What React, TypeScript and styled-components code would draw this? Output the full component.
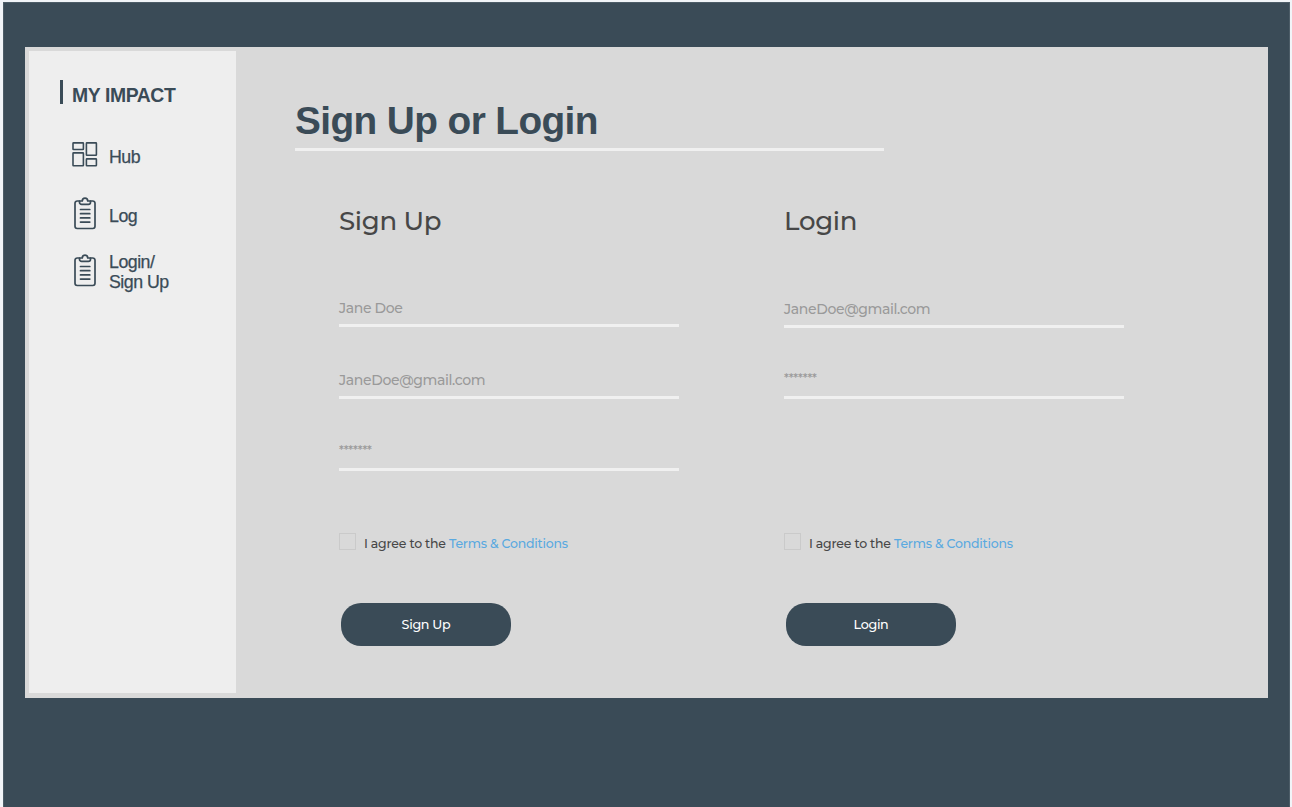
import React from "react";
import styled, { createGlobalStyle } from "styled-components";

const GlobalStyle = createGlobalStyle`
  * {
    box-sizing: border-box;
  }
  body {
    margin: 0;
    background: #f1f4f8;
    font-family: "Liberation Sans", Arial, sans-serif;
  }
`;

const Page = styled.div`
  height: 807px;
  padding: 2px 2px 0 3px;
`;

const Frame = styled.div`
  height: 805px;
  padding: 44px 21px 0 21px;
  background: #3a4b57;
  border: 1px solid #4d5d68;
  border-bottom: none;
`;

const Panel = styled.div`
  display: flex;
  height: 651px;
  padding: 4px 0 5px 4px;
  background: #d9d9d9;
`;

const Sidebar = styled.nav`
  width: 207px;
  padding: 29px 0 0 31px;
  background: #eeeeee;
  color: #3a4b57;
`;

const Brand = styled.div`
  display: flex;
  align-items: center;
  height: 24px;
  padding: 6px 0 0 9px;
  border-left: 3px solid #3a4b57;
  font-size: 19.4px;
  line-height: 24px;
  font-weight: bold;
  letter-spacing: -0.4px;
  white-space: nowrap;
`;

const NavItem = styled.a<{ $gap: number; $drop?: number }>`
  display: flex;
  align-items: flex-start;
  margin: ${(p) => p.$gap}px 0 0 12px;
  font-size: 17.8px;
  line-height: 20px;
  letter-spacing: -0.5px;
  -webkit-text-stroke: 0.25px #3a4b57;

  svg {
    flex: none;
    width: 26px;
    margin-right: 11px;
  }

  span {
    margin-top: ${(p) => p.$drop ?? 0}px;
  }
`;

const Main = styled.main`
  flex: 1;
  padding: 45px 0 0 59px;
`;

const Heading = styled.h1`
  width: 589px;
  height: 55px;
  margin: 0;
  border-bottom: 3px solid #f0f0f0;
  color: #3a4b57;
  font-size: 38.8px;
  line-height: 49px;
  font-weight: bold;
  letter-spacing: -0.6px;
`;

const Forms = styled.div`
  display: flex;
  gap: 105px;
  margin-left: 44px;
  font-family: Montserrat, Inter, sans-serif;
  font-weight: 500;
`;

const Form = styled.section`
  display: flex;
  flex-direction: column;
  width: 340px;
  height: 495px;
  padding-top: 53px;
`;

const FormTitle = styled.h2`
  height: 81px;
  margin: 0;
  color: #474747;
  font-size: 26px;
  line-height: 34px;
  font-weight: 500;
  letter-spacing: -0.3px;
`;

const Field = styled.div<{ $height: number }>`
  display: flex;
  flex-direction: column;
  justify-content: flex-end;
  height: ${(p) => p.$height}px;
  border-bottom: 3px solid #f0f0f0;
  color: #9a9a9a;
  font-size: 14px;
  line-height: 18px;
  letter-spacing: -0.36px;
  padding-bottom: 7px;
`;

const Mask = styled.span`
  font-size: 12px;
  line-height: 12px;
  padding-bottom: 4px;
`;

const Terms = styled.label`
  display: flex;
  align-items: center;
  gap: 8px;
  height: 18px;
  margin-top: auto;
  color: #474747;
  font-size: 12.5px;
  letter-spacing: -0.2px;
  white-space: nowrap;

  > span:last-child {
    padding-top: 4px;
  }
`;

const Checkbox = styled.span`
  flex: none;
  width: 17px;
  height: 17px;
  border: 1.5px solid #cacaca;
`;

const TermsLink = styled.a`
  color: #5aa9e0;
`;

const Submit = styled.button`
  width: 170px;
  height: 43px;
  margin: 53px 0 0 2px;
  padding: 0;
  border: none;
  border-radius: 20px;
  background: #3a4b57;
  color: #ffffff;
  font-family: inherit;
  font-size: 12.7px;
  font-weight: 500;
  letter-spacing: -0.3px;
`;

const HubIcon = () => (
  <svg height="25" viewBox="0 0 26 25" fill="none" stroke="#3a4b57" strokeWidth="1.6">
    <rect x="1" y="0.9" width="10.4" height="6.6" rx="0.5" />
    <rect x="14.4" y="0.9" width="10" height="12.4" rx="0.5" />
    <rect x="1" y="10.9" width="10.4" height="12.8" rx="0.5" />
    <rect x="14.4" y="16.9" width="10" height="6.8" rx="0.5" />
  </svg>
);

const ClipboardIcon = () => (
  <svg
    height="33"
    viewBox="0 0 26 33"
    fill="none"
    stroke="#3a4b57"
    strokeWidth="1.7"
    strokeLinecap="round"
    strokeLinejoin="round"
  >
    <path d="M7.5 4H5.2A2.2 2.2 0 0 0 3 6.2V29.3a2.2 2.2 0 0 0 2.2 2.2H20.8A2.2 2.2 0 0 0 23 29.3V6.2A2.2 2.2 0 0 0 20.8 4H18.5" />
    <path d="M7.5 4H10.3C10.3 2.2 11.4 1.2 13 1.2S15.7 2.2 15.7 4H18.5V5.2C18.5 6.5 17.7 7.4 16.4 7.4H9.6C8.3 7.4 7.5 6.5 7.5 5.2Z" />
    <path d="M8.5 12.5H17.8M8.5 16.7H17.8M8.5 20.9H17.8M8.5 25.1H17.8" />
  </svg>
);

const Agreement = () => (
  <Terms>
    <Checkbox />
    <span>
      I agree to the <TermsLink>Terms &amp; Conditions</TermsLink>
    </span>
  </Terms>
);

const App = () => {
  return (
    <>
      <GlobalStyle />
      <Page>
        <Frame>
          <Panel>
            <Sidebar>
              <Brand>MY IMPACT</Brand>
              <NavItem $gap={38} $drop={5}>
                <HubIcon />
                <span>Hub</span>
              </NavItem>
              <NavItem $gap={30} $drop={9}>
                <ClipboardIcon />
                <span>Log</span>
              </NavItem>
              <NavItem $gap={24} $drop={-2}>
                <ClipboardIcon />
                <span>
                  Login/
                  <br />
                  Sign Up
                </span>
              </NavItem>
            </Sidebar>
            <Main>
              <Heading>Sign Up or Login</Heading>
              <Forms>
                <Form>
                  <FormTitle>Sign Up</FormTitle>
                  <Field $height={42}>Jane Doe</Field>
                  <Field $height={72}>JaneDoe@gmail.com</Field>
                  <Field $height={72}>
                    <Mask>*******</Mask>
                  </Field>
                  <Agreement />
                  <Submit>Sign Up</Submit>
                </Form>
                <Form>
                  <FormTitle>Login</FormTitle>
                  <Field $height={43}>JaneDoe@gmail.com</Field>
                  <Field $height={71}>
                    <Mask>*******</Mask>
                  </Field>
                  <Agreement />
                  <Submit>Login</Submit>
                </Form>
              </Forms>
            </Main>
          </Panel>
        </Frame>
      </Page>
    </>
  );
};

export default App;
